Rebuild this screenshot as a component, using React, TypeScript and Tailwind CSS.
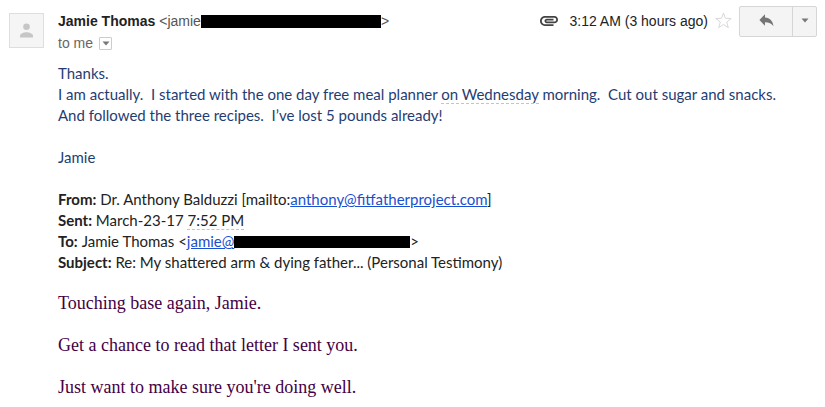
import React from "react";

function Redacted({ className }: { className: string }) {
  return <span aria-hidden="true" className={`inline-block bg-black ${className}`} />;
}

function DateHint({ children }: { children: React.ReactNode }) {
  return <span className="border-b border-dashed border-[#c4c4c4]">{children}</span>;
}

function Caret() {
  return (
    <svg width="8" height="5" viewBox="0 0 8 5" aria-hidden="true">
      <path d="M0.5 0.5h7L4 4.5z" fill="#777" />
    </svg>
  );
}

function Avatar() {
  return (
    <div className="mt-[13px] flex h-[35px] w-[35px] shrink-0 items-center justify-center border border-[#dedede] bg-[#f5f5f5]">
      <svg width="15" height="15" viewBox="0 0 15 15" aria-hidden="true" fill="#c6c6c6">
        <circle cx="7.5" cy="3.8" r="3.3" />
        <path d="M1 14.5v-1.7c0-2.3 3.8-3.6 6.5-3.6s6.5 1.3 6.5 3.6v1.7z" />
      </svg>
    </div>
  );
}

function Header() {
  return (
    <header className="flex justify-between font-['Liberation_Sans',Arial,sans-serif] text-sm">
      <div className="pt-[11px]">
        <div className="flex h-5 items-center whitespace-nowrap text-[#555]">
          <span className="mr-1 font-bold text-[#222]">Jamie Thomas</span>
          <span>&lt;jamie</span>
          <Redacted className="h-[13px] w-[180px]" />
          <span>&gt;</span>
        </div>
        <div className="mt-[2px] flex h-5 items-center gap-[6px] text-[#666]">
          <span>to me</span>
          <button
            type="button"
            aria-label="Show details"
            className="flex h-[13px] w-[13px] items-center justify-center rounded-[1px] border border-[#ccc] bg-white"
          >
            <Caret />
          </button>
        </div>
      </div>
      <div className="flex items-start pt-[6px]">
        <div className="flex h-[30px] items-center">
          <svg width="18" height="10" viewBox="2 7 20 11" role="img" aria-label="Attachment" fill="#444">
            <path d="M2 12.5C2 9.46 4.46 7 7.5 7H18c2.21 0 4 1.79 4 4s-1.79 4-4 4H9.5C8.12 15 7 13.88 7 12.5S8.12 10 9.5 10H17v2H9.41c-.55 0-.55 1 0 1H18c1.1 0 2-.9 2-2s-.9-2-2-2H7.5C5.57 9 4 10.57 4 12.5S5.57 16 7.5 16H17v2H7.5C4.46 18 2 15.54 2 12.5z" />
          </svg>
          <time className="ml-[11px] whitespace-nowrap text-[#222]">3:12 AM (3 hours ago)</time>
          <button type="button" aria-label="Star" className="ml-[7px] mb-[2px]">
            <svg width="17" height="17" viewBox="0 0 17 17" fill="none" stroke="#d8d8d8" strokeWidth="1">
              <path d="M8.5 1l1.9 5.3 5.8.2-4.5 3.5 1.6 5.7-4.800-3.300-4.800 3.300 1.600-5.700L0.800 6.500l5.800-.2z" />
            </svg>
          </button>
        </div>
        <div className="ml-[7px] flex h-[31px] rounded-[2px] border border-[#d6d6d6] bg-[#f4f4f4]">
          <button type="button" aria-label="Reply" className="flex w-[52px] items-center justify-center">
            <svg width="15" height="13" viewBox="0 0 15 13" fill="#757575" className="mb-[3px]">
              <path d="M6 0.3v3.3c5 .3 7.7 3.3 8.5 8.7C12.5 9.5 10 8.3 6 8.3v3.4L0.4 6z" />
            </svg>
          </button>
          <button
            type="button"
            aria-label="More"
            className="flex w-6 items-center justify-center border-l border-[#d6d6d6] pb-[3px]"
          >
            <Caret />
          </button>
        </div>
      </div>
    </header>
  );
}

const closing = [
  "Touching base again, Jamie.",
  "Get a chance to read that letter I sent you.",
  "Just want to make sure you're doing well.",
];

export default function App() {
  return (
    <main className="flex min-h-screen gap-[14px] bg-white pl-[9px] pr-2">
      <Avatar />
      <article className="min-w-0 flex-1">
        <Header />
        <div className="mt-[10px] font-[Lato,Carlito,sans-serif] text-[15px] leading-[21px] text-[#1f3d73]">
          <p>Thanks.</p>
          <p className="whitespace-pre-wrap">
            {"I am actually.  I started with the one day free meal planner "}
            <DateHint>on Wednesday</DateHint>
            {" morning.  Cut out sugar and snacks."}
          </p>
          <p className="whitespace-pre-wrap">{"And followed the three recipes.  I’ve lost 5 pounds already!"}</p>
          <p className="mt-[21px]">Jamie</p>
          <div className="mt-[21px] text-[#222]">
            <p>
              <b>From:</b> Dr. Anthony Balduzzi [mailto:
              <a href="mailto:anthony@fitfatherproject.com" className="text-[#1a4fd0] underline">
                anthony@fitfatherproject.com
              </a>
              ]
            </p>
            <p>
              <b>Sent:</b> March-23-17 <DateHint>7:52 PM</DateHint>
            </p>
            <p className="flex items-center">
              <b className="mr-1">To:</b>
              <span>Jamie Thomas &lt;</span>
              <a href="#jamie" className="flex items-center text-[#1a4fd0] underline">
                jamie@
                <Redacted className="h-3 w-[176px]" />
              </a>
              <span>&gt;</span>
            </p>
            <p>
              <b>Subject:</b> Re: My shattered arm &amp; dying father... (Personal Testimony)
            </p>
          </div>
        </div>
        <div className="mt-[20px] flex flex-col gap-[21px] font-['Liberation_Serif','Times_New_Roman',serif] text-lg leading-[21px] text-[#440044]">
          {closing.map((line) => (
            <p key={line}>{line}</p>
          ))}
        </div>
      </article>
    </main>
  );
}
